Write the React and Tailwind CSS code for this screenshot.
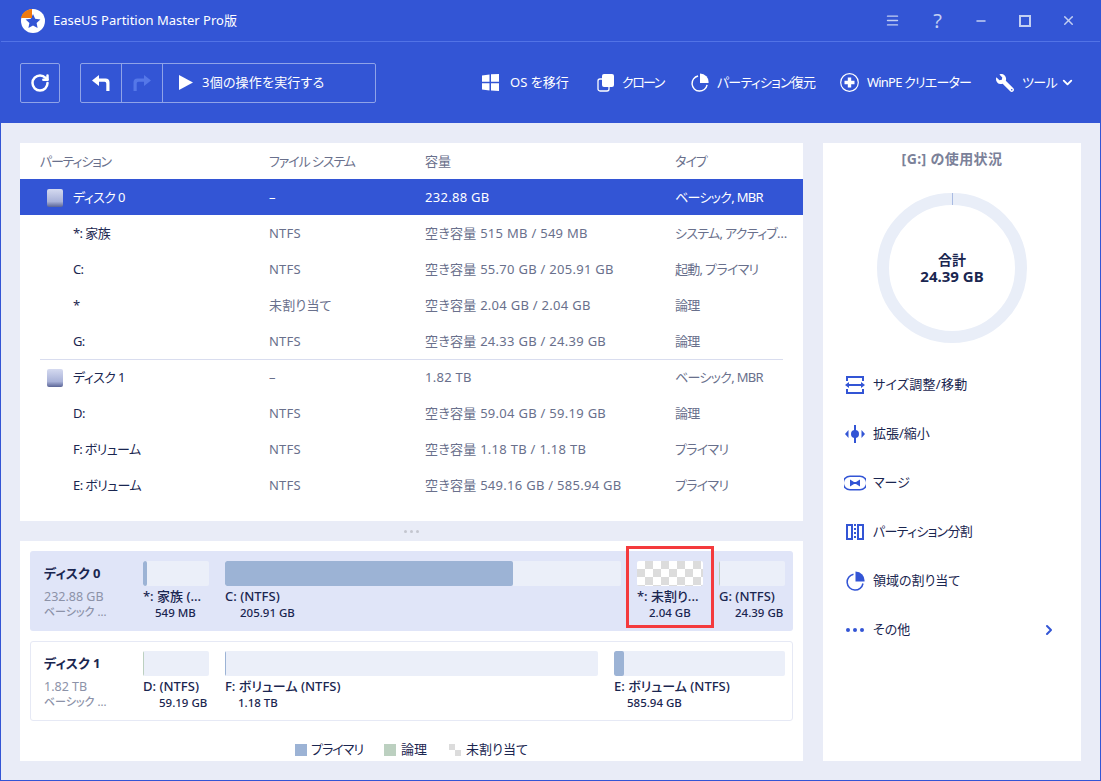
import { ChevronDown, ChevronRight, RotateCw, X, Minus, Menu } from "lucide-react";
import { FaWrench } from "react-icons/fa";

const FONT = "font-['Noto_Sans','Noto_Sans_CJK_JP',sans-serif] [font-feature-settings:'palt']";

const DISK_ROWS = [
  { disk: true, active: true, name: "ディスク 0", fs: "–", size: "232.88 GB", type: "ベーシック, MBR" },
  { name: "*: 家族", fs: "NTFS", size: "空き容量 515 MB / 549 MB", type: "システム, アクティブ…" },
  { name: "C:", fs: "NTFS", size: "空き容量 55.70 GB / 205.91 GB", type: "起動, プライマリ" },
  { name: "*", fs: "未割り当て", size: "空き容量 2.04 GB / 2.04 GB", type: "論理" },
  { name: "G:", fs: "NTFS", size: "空き容量 24.33 GB / 24.39 GB", type: "論理" },
  { disk: true, name: "ディスク 1", fs: "–", size: "1.82 TB", type: "ベーシック, MBR" },
  { name: "D:", fs: "NTFS", size: "空き容量 59.04 GB / 59.19 GB", type: "論理" },
  { name: "F: ボリューム", fs: "NTFS", size: "空き容量 1.18 TB / 1.18 TB", type: "プライマリ" },
  { name: "E: ボリューム", fs: "NTFS", size: "空き容量 549.16 GB / 585.94 GB", type: "プライマリ" },
];

function Logo() {
  return (
    <svg width="26" height="26" viewBox="0 0 26 26">
      <circle cx="13" cy="13" r="12" fill="#fff" />
      <path d="M13 6l2.2 4.8 5.2.6-3.8 3.5 1 5.1-4.6-2.6-4.6 2.6 1-5.1-3.8-3.5 5.2-.6z" fill="#3355d5" />
      <path d="M1 10C2 5 6 1.5 12 1v9z" fill="#f07a10" />
    </svg>
  );
}

function DiskIcon() {
  return (
    <div className="w-4 h-[18px] rounded-[2px] bg-gradient-to-b from-[#d5daf0] via-[#a9b2d8] via-70% to-[#5b6596]" />
  );
}

function TurnArrow({ color, flip }) {
  return (
    <svg width="18" height="16" viewBox="0 0 18 16" fill={color} className={flip ? "-scale-x-100" : ""}>
      <path d="M0 5.5L7 0v3.5h6.5a4 4 0 0 1 4 4V16h-3.2V8.5a1.7 1.7 0 0 0-1.7-1.7H7V11z" />
    </svg>
  );
}

function PlayIcon() {
  return (
    <svg width="14" height="15" viewBox="0 0 14 15" fill="#fff">
      <path d="M0 0l14 7.5L0 15z" />
    </svg>
  );
}

function WindowsIcon() {
  return (
    <svg width="17" height="17" viewBox="0 0 17 17" fill="#fff">
      <path d="M0 1.5l7.5-1v7.2H0zM9 .3L17 0v7.7H9zM0 9.2h7.5v7.2L0 15.5zM9 9.2h8V17l-8-.5z" />
    </svg>
  );
}

function CloneIcon() {
  return (
    <svg width="17" height="18" viewBox="0 0 17 18" fill="none">
      <rect x="1" y="5" width="11" height="12" rx="2" stroke="#fff" strokeWidth="1.3" />
      <rect x="5" y="0" width="12" height="13" rx="2" fill="#fff" />
    </svg>
  );
}

function PieIcon({ size = 19, color = "#fff" }) {
  return (
    <svg width={size} height={size} viewBox="0 0 20 20" fill="none">
      <path d="M8.5 3.2A8 8 0 1 0 18 12.5" stroke={color} strokeWidth="1.5" />
      <path d="M10.5 0.5A9 9 0 0 1 19.5 10.5H10.5z" fill={color} />
    </svg>
  );
}

function PlusCircleIcon() {
  return (
    <svg width="19" height="19" viewBox="0 0 19 19" fill="none">
      <circle cx="9.5" cy="9.5" r="8.8" stroke="#fff" strokeWidth="1.2" />
      <path d="M7.8 4.5h3.4v3.3h3.3v3.4h-3.3v3.3H7.8v-3.3H4.5V7.8h3.3z" fill="#fff" />
    </svg>
  );
}

function ResizeIcon() {
  return (
    <svg width="20" height="18" viewBox="0 0 20 18" fill="#3355d5">
      <path d="M1 0h18v5h-2V2H3v3H1zM1 18h18v-5h-2v3H3v-3H1z" />
      <path d="M0 9l4-3v2h12V6l4 3-4 3v-2H4v2z" />
    </svg>
  );
}

function ExtendIcon() {
  return (
    <svg width="20" height="18" viewBox="0 0 20 18" fill="#3355d5">
      <rect x="9" y="0" width="2" height="18" />
      <circle cx="10" cy="9" r="4" />
      <path d="M0 9l3.5-4v8zM20 9l-3.5-4v8z" />
    </svg>
  );
}

function MergeIcon() {
  return (
    <svg width="22" height="16" viewBox="0 0 22 16" fill="none">
      <path d="M6 1.2h10a6.8 6.8 0 0 1 0 13.6H6A6.8 6.8 0 0 1 6 1.2z" stroke="#3355d5" strokeWidth="1.6" />
      <path d="M6 4.5l4 2.5h2l4-2.5v7l-4-2.5h-2l-4 2.5z" fill="#3355d5" />
    </svg>
  );
}

function SplitIcon() {
  return (
    <svg width="18" height="16" viewBox="0 0 18 16" fill="none" stroke="#3355d5" strokeWidth="2">
      <rect x="1" y="1" width="5" height="14" />
      <rect x="12" y="1" width="5" height="14" />
      <path d="M9 0v16" strokeDasharray="2 2" />
    </svg>
  );
}

const ACTIONS = [
  { icon: <ResizeIcon />, label: "サイズ調整/移動", track: "tracking-[0.3px]" },
  { icon: <ExtendIcon />, label: "拡張/縮小" },
  { icon: <MergeIcon />, label: "マージ" },
  { icon: <SplitIcon />, label: "パーティション分割", track: "tracking-[-0.7px]" },
  { icon: <PieIcon size={20} color="#3355d5" />, label: "領域の割り当て" },
  {
    icon: (
      <div className="flex gap-[3px]">
        <span className="size-1 rounded-full bg-[#3355d5]" />
        <span className="size-1 rounded-full bg-[#3355d5]" />
        <span className="size-1 rounded-full bg-[#3355d5]" />
      </div>
    ),
    label: "その他",
    more: true,
  },
];

function Bar({ width, fill, fillClass = "bg-[#9cb3d5]", checker }) {
  return (
    <div
      className={`h-[25px] rounded-[2px] overflow-hidden ${checker ? "bg-[repeating-conic-gradient(#dcdcdc_0_25%,#ffffff_0_50%)] bg-[length:16px_16px]" : "bg-[#ebeff9]"}`}
      style={{ width }}
    >
      {fill ? <div className={`h-full rounded-[2px] ${fillClass}`} style={{ width: fill }} /> : null}
    </div>
  );
}

function Part({ width, fill, fillClass, checker, label, size, indent }) {
  return (
    <div className="shrink-0 relative" style={{ width }}>
      <Bar width={width} fill={fill} fillClass={fillClass} checker={checker} />
      <div className="mt-px text-[13px] leading-[18px] font-medium text-[#1a2650] whitespace-nowrap">{label}</div>
      <div className="text-[11.5px] leading-[15px] font-medium text-[#1a2650] whitespace-nowrap" style={{ paddingLeft: indent }}>
        {size}
      </div>
    </div>
  );
}

function DiskCard({ active, name, size, children }) {
  return (
    <div
      className={`h-20 rounded-[3px] flex ${active ? "bg-[#e0e5f8] pt-[10px] pl-[14px] pr-2" : "bg-white border border-[#e6e9f5] pt-[9px] pl-[13px] pr-2"}`}
    >
      <div className="w-[99px] shrink-0">
        <div className="text-[13px] leading-[23px] font-bold text-[#1a2650] pt-px">{name}</div>
        <div className="mt-[4px] text-[12.5px] leading-4 text-[#8c92a8]">{size}</div>
        <div className="text-[11px] leading-[14px] font-medium text-[#8c92a8]">ベーシック ...</div>
      </div>
      <div className="flex gap-4">{children}</div>
    </div>
  );
}

export default function App() {
  return (
    <div className={`relative w-[1101px] h-[781px] flex flex-col overflow-hidden bg-[#e9ecf7] border-x border-b border-[#3355d5] text-[13px] ${FONT}`}>
      {/* title bar */}
      <div className="bg-[#3355d5] h-[42px] shrink-0 flex items-center border-b border-[#5273e6] text-white pl-[19px]">
        <Logo />
        <span className="ml-[7px] text-[13px]">EaseUS Partition Master Pro版</span>
        <div className="ml-auto flex items-center text-[#c3cff2]">
          <Menu size={15} strokeWidth={2.2} />
          <span className="ml-[33px] text-[20px] leading-none">?</span>
          <Minus className="ml-[32px]" size={14} strokeWidth={2.2} />
          <div className="ml-[31px] size-3 border-2 border-[#c3cff2]" />
          <X className="ml-[30px] mr-[24px]" size={15} strokeWidth={2.4} />
        </div>
      </div>

      {/* toolbar */}
      <div className="bg-[#3355d5] h-[81px] shrink-0 flex items-center pl-[19px] text-white whitespace-nowrap">
        <div className="size-10 shrink-0 rounded-[2px] border border-[#8fa3e8] flex items-center justify-center">
          <RotateCw size={20} strokeWidth={3} />
        </div>
        <div className="ml-5 h-10 w-[296px] shrink-0 rounded-[2px] border border-[#8fa3e8] flex items-center">
          <div className="w-[41px] h-full flex items-center justify-center border-r border-[#8fa3e8]">
            <TurnArrow color="#fff" />
          </div>
          <div className="w-[41px] h-full flex items-center justify-center border-r border-[#8fa3e8]">
            <TurnArrow color="#5577e8" flip />
          </div>
          <div className="ml-4"><PlayIcon /></div>
          <span className="ml-[9px] tracking-[0.2px]">3個の操作を実行する</span>
        </div>
        <div className="ml-[106px] flex items-center">
          <div className="w-[115px] flex items-center">
            <WindowsIcon />
            <span className="ml-[11px]">OS を移行</span>
          </div>
          <div className="w-[93px] flex items-center">
            <CloneIcon />
            <span className="ml-2 tracking-[-1.6px]">クローン</span>
          </div>
          <div className="w-[150px] flex items-center">
            <PieIcon />
            <span className="ml-2 tracking-[-0.8px]">パーティション復元</span>
          </div>
          <div className="w-[156px] flex items-center">
            <PlusCircleIcon />
            <span className="ml-2 tracking-[-0.8px]">WinPE クリエーター</span>
          </div>
          <FaWrench size={18} className="-scale-x-100" />
          <span className="ml-2 tracking-[-0.6px]">ツール</span>
          <ChevronDown className="ml-[3px]" size={15} strokeWidth={3} />
        </div>
      </div>

      {/* body */}
      <div className="flex-1 flex gap-5 pt-5 pl-[19px] pr-[19px] pb-[19px] min-h-0">
        <div className="w-[783px] flex flex-col">
          <div className="bg-white h-[378px] shrink-0">
            <div className="h-9 pt-px grid grid-cols-[229px_156px_250px_1fr] items-center pl-5 text-[#69708c] whitespace-nowrap">
              <span className="tracking-[-1.2px]">パーティション</span>
              <span className="tracking-[-1.1px]">ファイル システム</span>
              <span>容量</span>
              <span className="tracking-[-1px]">タイプ</span>
            </div>
            {DISK_ROWS.map((r) => (
              <div key={r.name}>
                {r.name === "ディスク 1" && <div className="mx-5 border-t border-[#d9ddef]" />}
                <div
                  className={`${r.name === "ディスク 1" ? "h-[35px]" : "h-9"} pt-px grid grid-cols-[229px_156px_250px_1fr] items-center pl-5 whitespace-nowrap ${r.active ? "bg-[#3355d5] text-white" : "text-[#69708c]"}`}
                >
                  <div className={`flex items-center ${r.active ? "" : "text-[#1a2650]"}`}>
                    <div className="w-[7px]" />
                    {r.disk ? <DiskIcon /> : <div className="w-4" />}
                    <span className="ml-[10px] tracking-[-0.6px]">{r.name}</span>
                  </div>
                  <span className="tracking-[0.2px]">{r.fs}</span>
                  <span className="tracking-[0.28px]">{r.size}</span>
                  <span className="tracking-[-0.7px]">{r.type}</span>
                </div>
              </div>
            ))}
          </div>

          {/* splitter */}
          <div className="h-5 shrink-0 flex items-center justify-center gap-[3px]">
            <span className="size-[3px] rounded-full bg-[#c4c6cf]" />
            <span className="size-[3px] rounded-full bg-[#c4c6cf]" />
            <span className="size-[3px] rounded-full bg-[#c4c6cf]" />
          </div>

          <div className="bg-white flex-1 px-[10px] pt-[10px] flex flex-col gap-[10px]">
            <DiskCard active name="ディスク 0" size="232.88 GB">
              <Part width={66} fill={4} label="*: 家族 (..." size="549 MB" indent={12} />
              <Part width={396} fill={288} label="C: (NTFS)" size="205.91 GB" indent={15} />
              <Part width={66} checker label="*: 未割り..." size="2.04 GB" indent={12} />
              <Part width={66} fill={1} fillClass="bg-[#bcd0c0]" label="G: (NTFS)" size="24.39 GB" indent={16} />
            </DiskCard>
            <DiskCard name="ディスク 1" size="1.82 TB">
              <Part width={66} fill={1} fillClass="bg-[#bcd0c0]" label="D: (NTFS)" size="59.19 GB" indent={16} />
              <Part width={373} fill={1} label="F: ボリューム (NTFS)" size="1.18 TB" indent={13} />
              <Part width={171} fill={10} label="E: ボリューム (NTFS)" size="585.94 GB" indent={13} />
            </DiskCard>
            <div className="mt-[9px] flex justify-center items-center text-[#1a2650]">
              <span className="size-3 bg-[#9cb3d5]" />
              <span className="ml-[4px] tracking-[-1px]">プライマリ</span>
              <span className="ml-[21px] size-3 bg-[#bcd0c0]" />
              <span className="ml-[5px]">論理</span>
              <span className="ml-[22px] size-3 bg-[repeating-conic-gradient(#ffffff_0_25%,#dcdcdc_0_50%)] bg-[length:12px_12px]" />
              <span className="ml-[5px]">未割り当て</span>
            </div>
          </div>
        </div>

        {/* right panel */}
        <div className="bg-white w-[258px] flex flex-col">
          <div className="pt-[6px] text-center text-[14px] tracking-[0.4px] font-bold text-[#7b8199] leading-5">[G:] の使用状況</div>
          <div className="mt-6 self-center relative size-[150px] rounded-full border-[12px] border-[#e9eef8] flex flex-col items-center justify-center text-[#1a2650] font-bold leading-4">
            <div className="absolute -top-[12px] left-1/2 w-px h-3 bg-[#a9bbe3]" />
            <span className="text-[14px]">合計</span>
            <span className="text-[15px]">24.39 GB</span>
          </div>
          <div className="mt-[17px] flex flex-col">
            {ACTIONS.map((a) => (
              <div key={a.label} className="h-[49px] flex items-center pl-[21px] pr-6 text-[#1a2650]">
                <div className="w-[22px] flex justify-center">{a.icon}</div>
                <span className={`ml-[7px] ${a.track || ""}`}>{a.label}</span>
                {a.more && <ChevronRight className="ml-auto text-[#3355d5]" size={16} strokeWidth={3} />}
              </div>
            ))}
          </div>
        </div>
      </div>

      {/* highlight around the unallocated partition */}
      <div className="absolute left-[625px] top-[546px] w-[88px] h-[82px] border-[3px] border-[#f43a3d]" />
    </div>
  );
}
